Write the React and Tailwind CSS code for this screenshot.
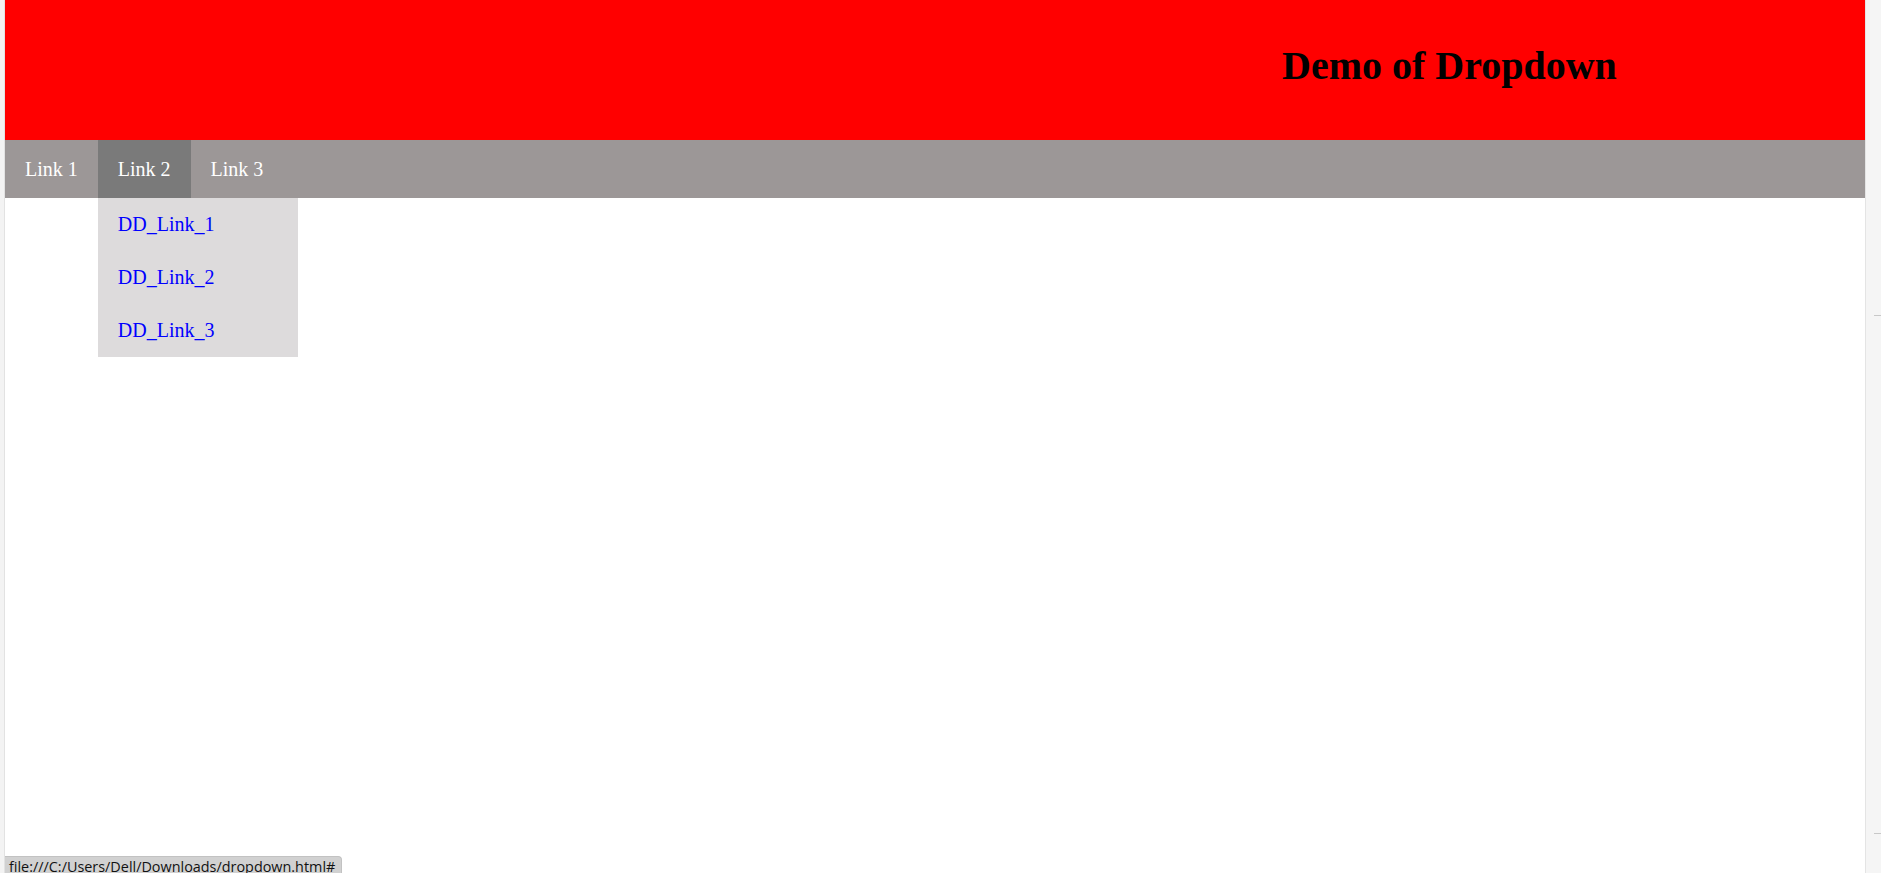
import React from 'react';

const links = ['Link 1', 'Link 2', 'Link 3'];
const ddLinks = ['DD_Link_1', 'DD_Link_2', 'DD_Link_3'];

export default function App() {
  return (
    <div className="relative flex h-screen w-full overflow-hidden bg-white" style={{ fontFamily: '"Liberation Serif", serif' }}>
      {/* left window edge */}
      <div className="w-[5px] shrink-0 bg-[#f3f3f3] border-r border-[#e2e2e2]" />

      <div className="flex-1 flex flex-col">
        <header className="h-[140px] bg-[#ff0000] flex items-center pl-[1277px] pb-[8px]">
          <h1 className="text-[40px] font-bold text-black leading-none whitespace-nowrap">Demo of Dropdown</h1>
        </header>

        <nav className="h-[58px] bg-[#9c9797] flex">
          {links.map((l, i) => (
            <div key={l} className={`relative flex items-center px-5 text-[20px] text-white ${i === 1 ? 'bg-[#7a7a7a]' : ''}`}>
              <a href="#">{l}</a>
              {i === 1 && (
                <div className="absolute top-[58px] left-0 w-[200px] bg-[#dddbdc] flex flex-col">
                  {ddLinks.map((d) => (
                    <a key={d} href="#" className="px-5 py-[15px] leading-[23px] text-[20px] text-[#0000ff]">
                      {d}
                    </a>
                  ))}
                </div>
              )}
            </div>
          ))}
        </nav>
      </div>

      {/* scrollbar track */}
      <div className="relative w-[16px] shrink-0 bg-[#f5f5f5] border-l border-[#e4e4e4]">
        <div className="absolute top-[315px] right-0 w-[7px] h-px bg-[#c8c8c8]" />
        <div className="absolute top-[833px] right-0 w-[7px] h-px bg-[#c8c8c8]" />
      </div>

      {/* status bubble */}
      <div
        className="absolute bottom-0 left-[5px] h-[17px] w-[337px] bg-[#d1d1d1] border-t border-r border-[#c2c2c2] rounded-tr-[4px] pl-[4px] overflow-hidden"
        style={{ fontFamily: '"Open Sans", "Noto Sans", sans-serif' }}
      >
        <div className="text-[14.4px] leading-[19px] text-[#111] whitespace-nowrap">file:///C:/Users/Dell/Downloads/dropdown.html#</div>
      </div>
    </div>
  );
}
